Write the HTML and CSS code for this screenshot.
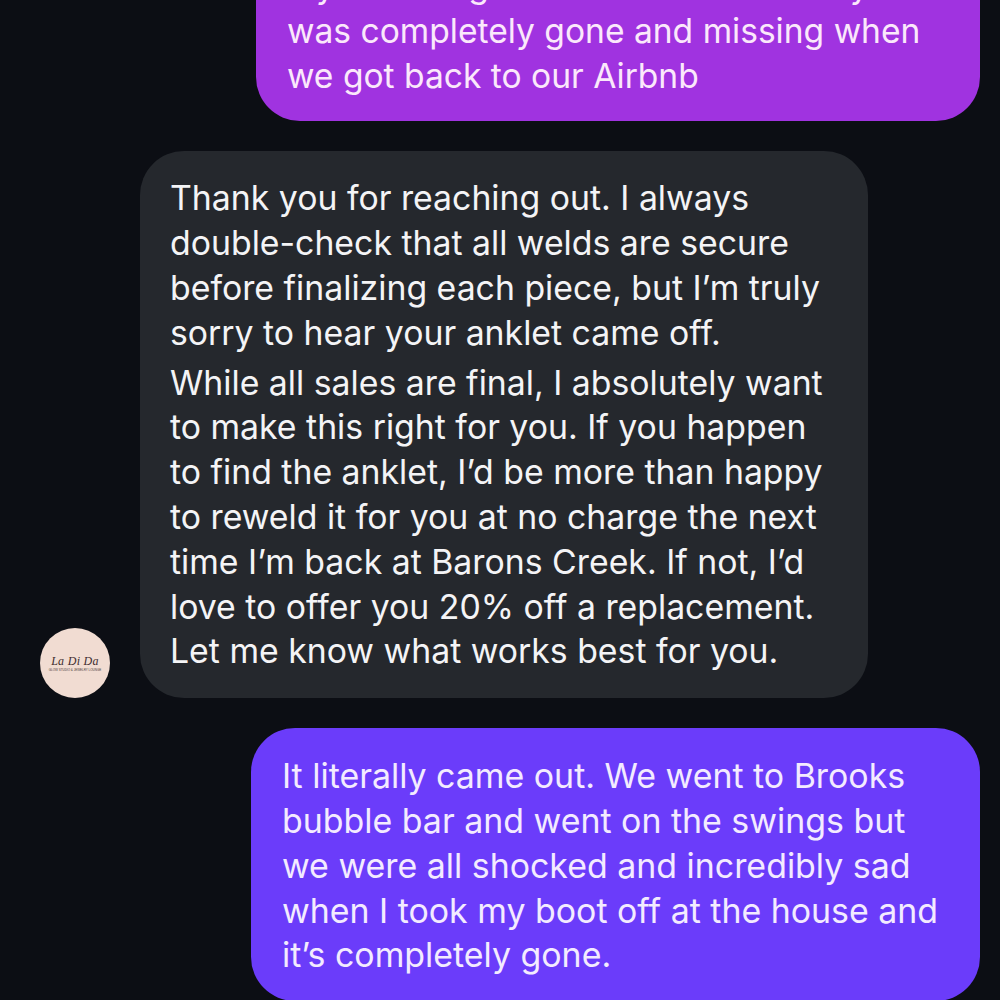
FILE: index.html
```html
<!DOCTYPE html>
<html lang="en">
<head>
    <meta charset="UTF-8">
    <meta name="viewport" content="width=device-width, initial-scale=1.0">
    <title>Messages</title>
    <link rel="stylesheet" href="styles.css">
</head>
<body>
    <div class="thread">
        <div class="row row-out">
            <div class="bubble bubble-pink">
                <p>my anklet again and it fell off and my anklet</p>
                <p>was completely gone and missing when</p>
                <p>we got back to our Airbnb</p>
            </div>
        </div>

        <div class="row row-in">
            <div class="avatar">
                <span class="avatar-name">La Di Da</span>
                <span class="avatar-sub">GLOW STUDIO &amp; JEWELRY LOUNGE</span>
            </div>
            <div class="bubble bubble-grey">
                <div class="para">
                    <p>Thank you for reaching out. I always</p>
                    <p>double-check that all welds are secure</p>
                    <p>before finalizing each piece, but I’m truly</p>
                    <p>sorry to hear your anklet came off.</p>
                </div>
                <div class="para">
                    <p>While all sales are final, I absolutely want</p>
                    <p>to make this right for you. If you happen</p>
                    <p>to find the anklet, I’d be more than happy</p>
                    <p>to reweld it for you at no charge the next</p>
                    <p>time I’m back at Barons Creek. If not, I’d</p>
                    <p>love to offer you 20% off a replacement.</p>
                    <p>Let me know what works best for you.</p>
                </div>
            </div>
        </div>

        <div class="row row-out">
            <div class="bubble bubble-violet">
                <p>It literally came out. We went to Brooks</p>
                <p>bubble bar and went on the swings but</p>
                <p>we were all shocked and incredibly sad</p>
                <p>when I took my boot off at the house and</p>
                <p>it’s completely gone.</p>
            </div>
        </div>
    </div>
</body>
</html>
```

FILE: styles.css
```css
html, body {
    margin: 0;
    padding: 0;
}
body {
    width: 1000px;
    height: 1000px;
    overflow: hidden;
    background-color: #0c0e14;
    color: #f4f4f6;
    font-family: Inter, "Liberation Sans", sans-serif;
    font-size: 33.9px;
    line-height: 44.8px;
}
p {
    margin: 0;
    white-space: nowrap;
}
.thread {
    display: flex;
    flex-direction: column;
    gap: 30px;
    margin-top: -61px;
}
.row {
    display: flex;
    align-items: flex-end;
}
.row-out {
    justify-content: flex-end;
    padding-right: 20px;
}
.row-in {
    padding-left: 40px;
    gap: 30px;
}
.bubble {
    box-sizing: border-box;
    border-radius: 44px;
    padding: 25px 20px 23px 31px;
}
.bubble-pink {
    width: 724px;
    font-size: 33.6px;
    background-color: #a033e0;
    color: #fbe8fb;
}
.bubble-grey {
    width: 728px;
    padding-left: 30px;
    padding-bottom: 24px;
    font-size: 33.8px;
    background-color: #25282d;
}
.bubble-violet {
    width: 729px;
    padding-top: 26px;
    background-color: #6b3cfa;
    color: #f3ebff;
}
.para + .para {
    margin-top: 5px;
}
.avatar {
    width: 70px;
    height: 70px;
    border-radius: 50%;
    background-color: #f1dcd2;
    display: flex;
    flex-direction: column;
    align-items: center;
    justify-content: center;
    flex-shrink: 0;
}
.avatar-name {
    font-family: "Liberation Serif", serif;
    font-style: italic;
    font-size: 12px;
    line-height: 13px;
    letter-spacing: 0.3px;
    color: #3f2c30;
}
.avatar-sub {
    font-family: "Liberation Sans", sans-serif;
    font-size: 3px;
    line-height: 4px;
    color: #4a3a3a;
    white-space: nowrap;
}
```
